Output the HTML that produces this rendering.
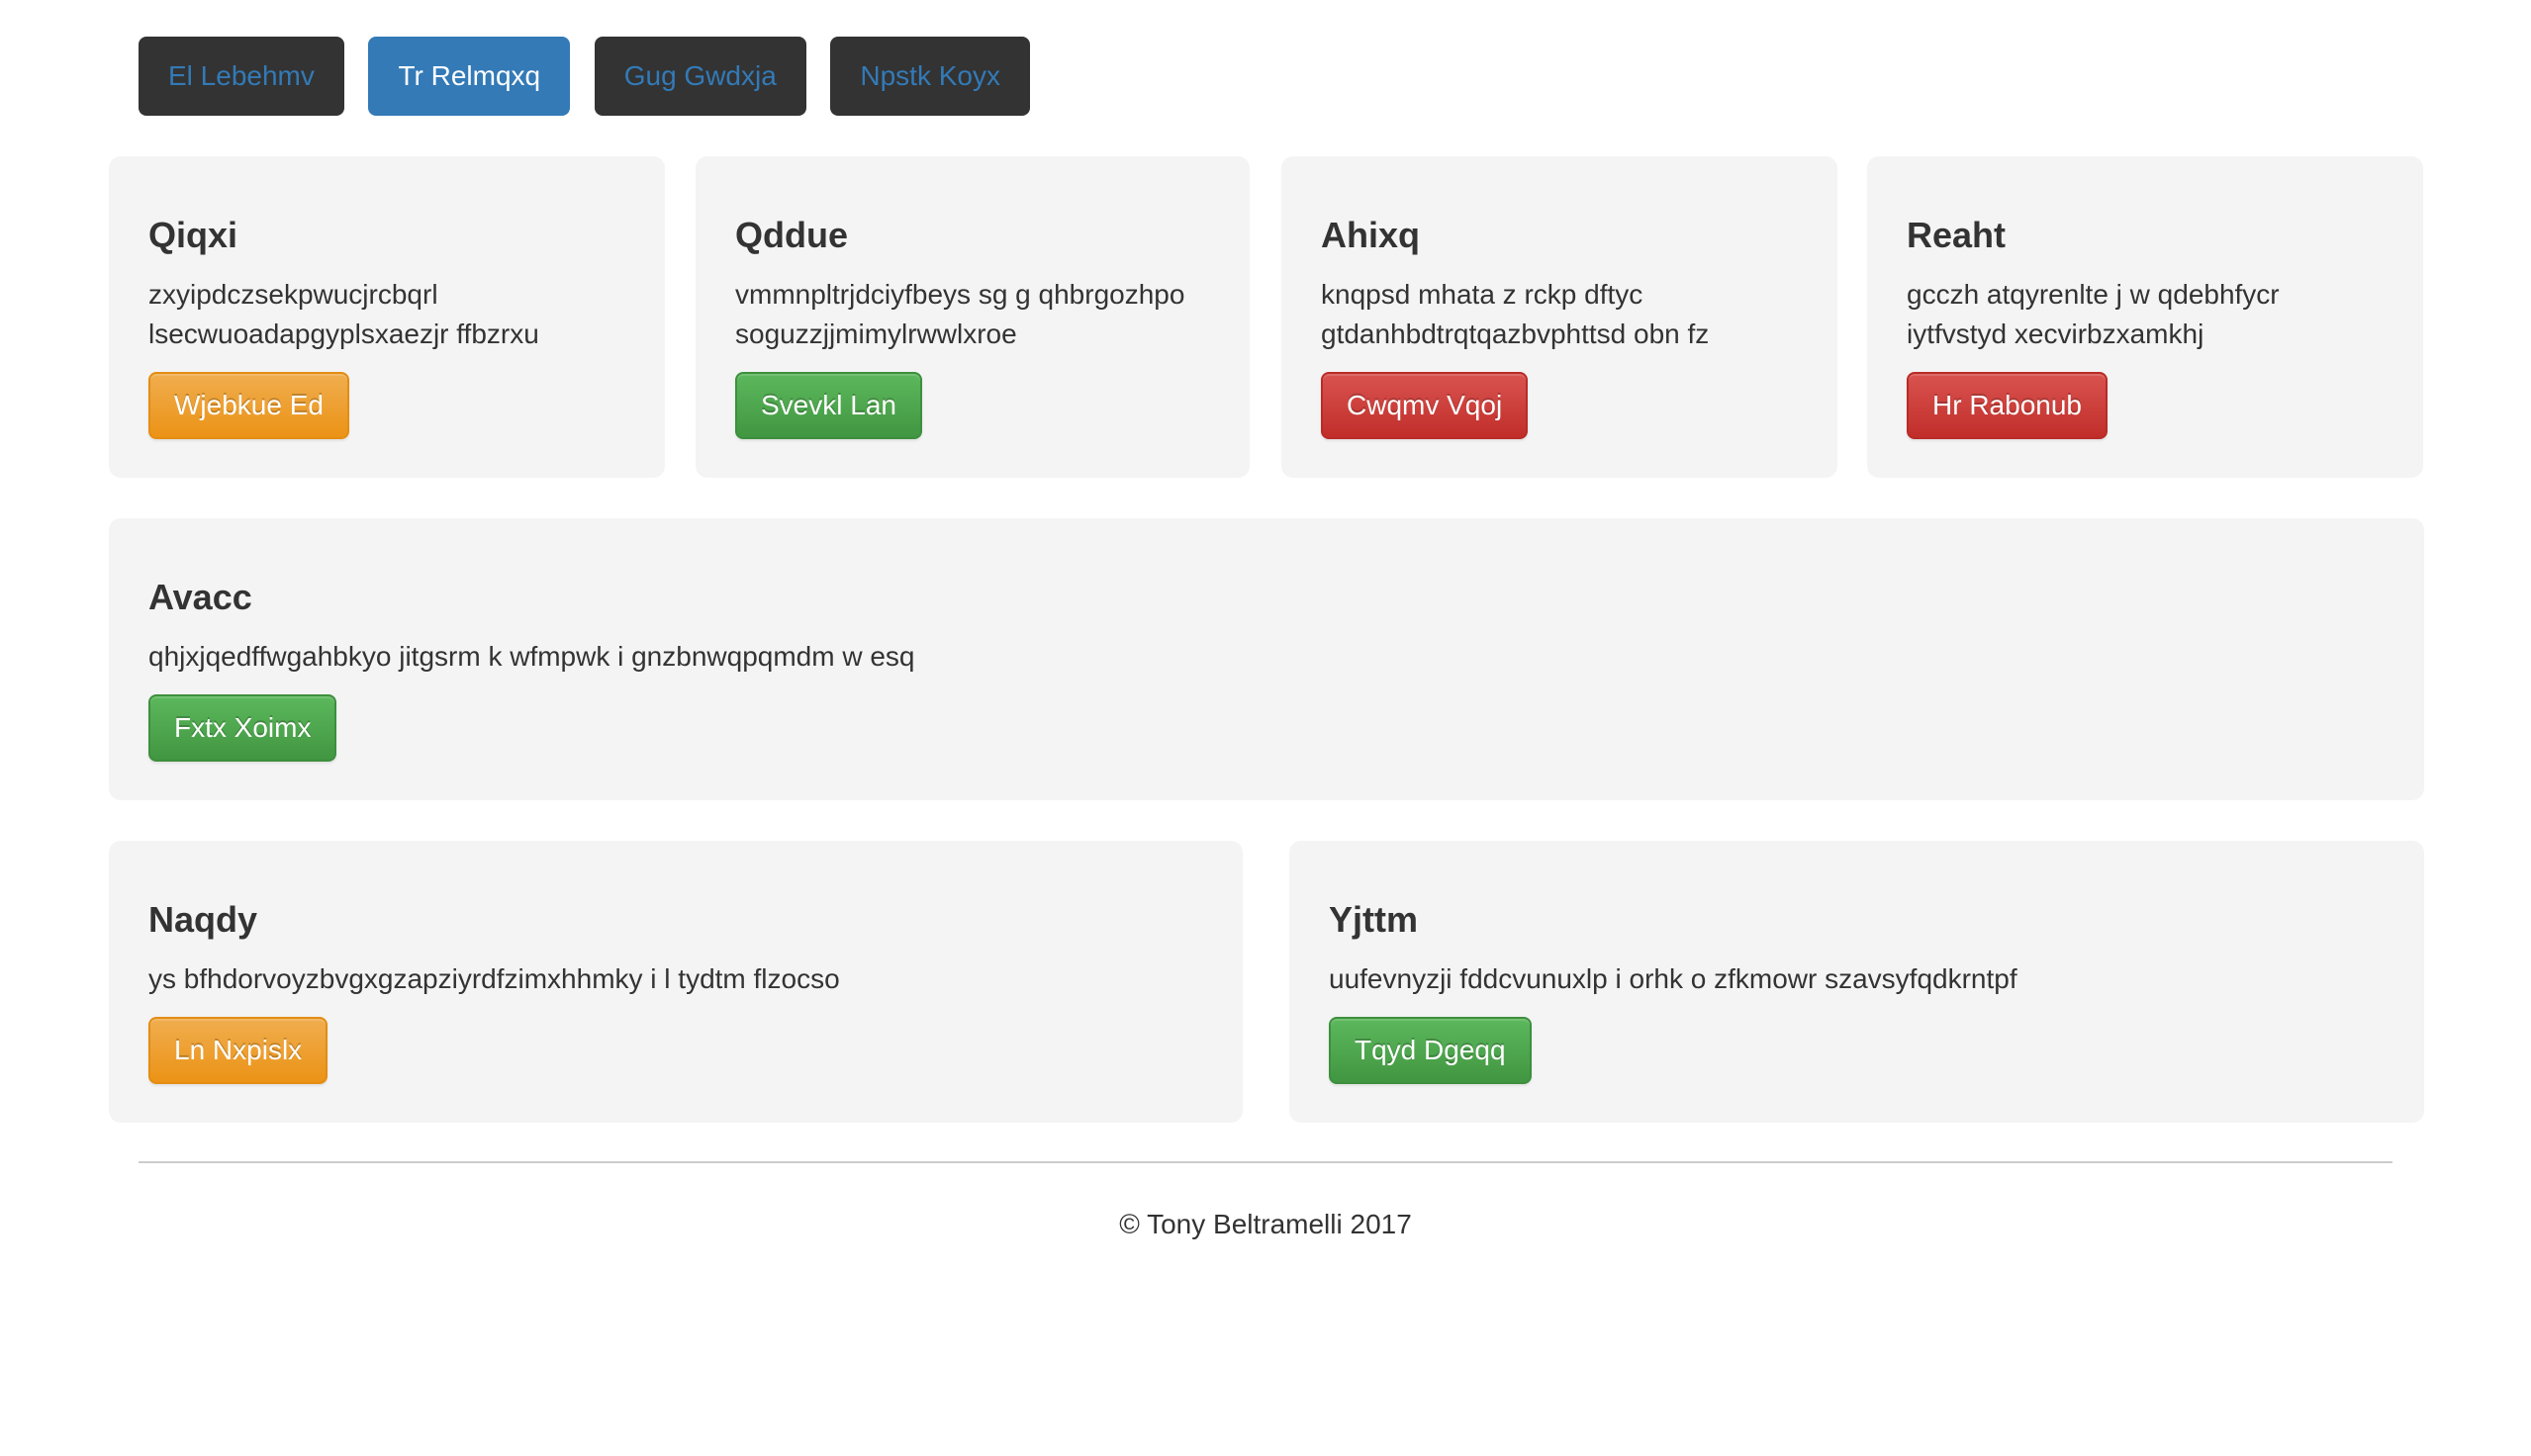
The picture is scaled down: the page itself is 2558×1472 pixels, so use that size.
<!DOCTYPE html>
<html><head><meta charset="utf-8"><style>
html,body{margin:0;padding:0;background:#fff}
body{width:1279px;height:736px;zoom:2;font-family:"Liberation Sans",Helvetica,Arial,sans-serif;font-size:14px;color:#333;position:relative;overflow:hidden}
.nav{position:absolute;top:18.5px;left:70px;display:flex;gap:12.3px}
.nav a{display:block;height:40px;line-height:40px;padding:0 15px;background:#333;color:#337ab7;border-radius:4px;text-decoration:none}
.nav a.act{background:#337ab7;color:#fff}
.card{position:absolute;background:#f4f4f4;border-radius:6px;padding:20px;box-sizing:border-box}
.card h4{margin:10px 0 10px;font-size:18px;line-height:20px;font-weight:bold;color:#333}
.card p{margin:0 0 9px;line-height:20px}
.btn{display:inline-block;height:34px;line-height:32px;padding:0 12px;color:#fff;border-radius:4px;border:1px solid;box-sizing:border-box;text-shadow:0 -1px 0 rgba(0,0,0,.2);box-shadow:inset 0 1px 0 rgba(255,255,255,.15),0 1px 1px rgba(0,0,0,.075)}
.o{background:linear-gradient(#f0ad4e,#eb9316);border-color:#e38d13}
.g{background:linear-gradient(#5cb85c,#419641);border-color:#3e8f3e}
.r{background:linear-gradient(#d9534f,#c12e2a);border-color:#b92c28}
hr{position:absolute;top:587px;left:70px;width:1139px;margin:0;border:0;border-top:1px solid #ccc}
.foot{position:absolute;top:609px;left:0;width:1279px;text-align:center;line-height:20px}
</style></head><body>
<div class="nav"><a href="#">El Lebehmv</a><a href="#" class="act">Tr Relmqxq</a><a href="#">Gug Gwdxja</a><a href="#">Npstk Koyx</a></div>

<div class="card" style="left:55px;top:79px;width:281px;height:162.5px"><h4>Qiqxi</h4><p>zxyipdczsekpwucjrcbqrl lsecwuoadapgyplsxaezjr ffbzrxu</p><span class="btn o">Wjebkue Ed</span></div>
<div class="card" style="left:351.5px;top:79px;width:280px;height:162.5px"><h4>Qddue</h4><p>vmmnpltrjdciyfbeys sg g qhbrgozhpo soguzzjjmimylrwwlxroe</p><span class="btn g">Svevkl Lan</span></div>
<div class="card" style="left:647.5px;top:79px;width:281px;height:162.5px"><h4>Ahixq</h4><p>knqpsd mhata z rckp dftyc gtdanhbdtrqtqazbvphttsd obn fz</p><span class="btn r">Cwqmv Vqoj</span></div>
<div class="card" style="left:943.5px;top:79px;width:281px;height:162.5px"><h4>Reaht</h4><p>gcczh atqyrenlte j w qdebhfycr iytfvstyd xecvirbzxamkhj</p><span class="btn r">Hr Rabonub</span></div>

<div class="card" style="left:55px;top:262px;width:1170px;height:142.5px"><h4>Avacc</h4><p>qhjxjqedffwgahbkyo jitgsrm k wfmpwk i gnzbnwqpqmdm w esq</p><span class="btn g">Fxtx Xoimx</span></div>

<div class="card" style="left:55px;top:425px;width:573px;height:142.5px"><h4>Naqdy</h4><p>ys bfhdorvoyzbvgxgzapziyrdfzimxhhmky i l tydtm flzocso</p><span class="btn o">Ln Nxpislx</span></div>
<div class="card" style="left:651.5px;top:425px;width:573.5px;height:142.5px"><h4>Yjttm</h4><p>uufevnyzji fddcvunuxlp i orhk o zfkmowr szavsyfqdkrntpf</p><span class="btn g">Tqyd Dgeqq</span></div>

<hr>
<div class="foot">© Tony Beltramelli 2017</div>
</body></html>
